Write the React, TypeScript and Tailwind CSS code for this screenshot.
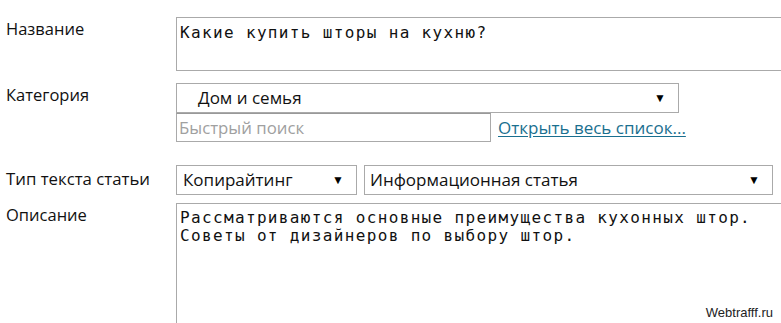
import React from 'react';

const labelFont = { fontFamily: '"Open Sans", "Noto Sans", sans-serif' };
const monoFont = { fontFamily: '"DejaVu Sans Mono", "Liberation Mono", monospace' };

function Arrow() {
  return <span className="text-[12px] leading-none text-black">▼</span>;
}

function FakeSelect({ value, className, pad }: { value: string; className: string; pad: string }) {
  return (
    <div
      className={`flex items-center justify-between border border-[#aaa] bg-white pr-[12px] text-[17px] text-[#111] ${pad} ${className}`}
    >
      <span>{value}</span>
      <Arrow />
    </div>
  );
}

export default function App() {
  return (
    <div className="relative h-[323px] w-[781px] overflow-hidden bg-white" style={labelFont}>
      <div className="flex flex-col pt-[17px]">
        {/* название */}
        <div className="flex">
          <div className="w-[176px] shrink-0 pl-[6px] text-[16.5px] text-[#111]">Название</div>
          <div
            className="h-[54px] w-[640px] shrink-0 border border-[#aaa] px-[3px] pt-[3px] text-[16px] tracking-[1.35px] text-[#111]"
            style={monoFont}
          >
            Какие купить шторы на кухню?
          </div>
        </div>

        {/* категория */}
        <div className="mt-[12px] flex">
          <div className="w-[176px] shrink-0 pl-[6px] text-[16.5px] text-[#111]">Категория</div>
          <div className="flex flex-col">
            <FakeSelect value="Дом и семья" className="h-[30px] w-[503px]" pad="pl-[21px]" />
            <div className="flex items-end">
              <div className="flex h-[29px] w-[315px] items-center border border-[#aaa] border-t-[#999] px-[2px] text-[16.8px] text-[#a0a0a0]">
                Быстрый поиск
              </div>
              <a href="#" className="mb-[2px] ml-[7px] text-[17px] text-[#1a6f8f] underline underline-offset-2">
                Открыть весь список...
              </a>
            </div>
          </div>
        </div>

        {/* тип текста */}
        <div className="mt-[23px] flex">
          <div className="w-[176px] shrink-0 pl-[6px] pt-[1px] text-[16.8px] text-[#111]">Тип текста статьи</div>
          <div className="flex gap-[7px]">
            <FakeSelect value="Копирайтинг" className="h-[30px] w-[181px]" pad="pl-[6px]" />
            <FakeSelect value="Информационная статья" className="h-[30px] w-[409px]" pad="pl-[5px]" />
          </div>
        </div>

        {/* описание */}
        <div className="mt-[8px] flex">
          <div className="w-[176px] shrink-0 pl-[6px] text-[16.5px] text-[#111]">Описание</div>
          <div
            className="h-[140px] w-[640px] shrink-0 border border-[#aaa] px-[3px] pt-[5px] text-[16px] leading-[18px] tracking-[1.35px] text-[#111]"
            style={monoFont}
          >
            Рассматриваются основные преимущества кухонных штор.
            <br />
            Советы от дизайнеров по выбору штор.
          </div>
        </div>
      </div>

      <div
        className="absolute bottom-[1px] right-[8px] text-[13px] text-[#222]"
        style={{ fontFamily: '"Liberation Sans", Arial, sans-serif' }}
      >
        Webtrafff.ru
      </div>
    </div>
  );
}
